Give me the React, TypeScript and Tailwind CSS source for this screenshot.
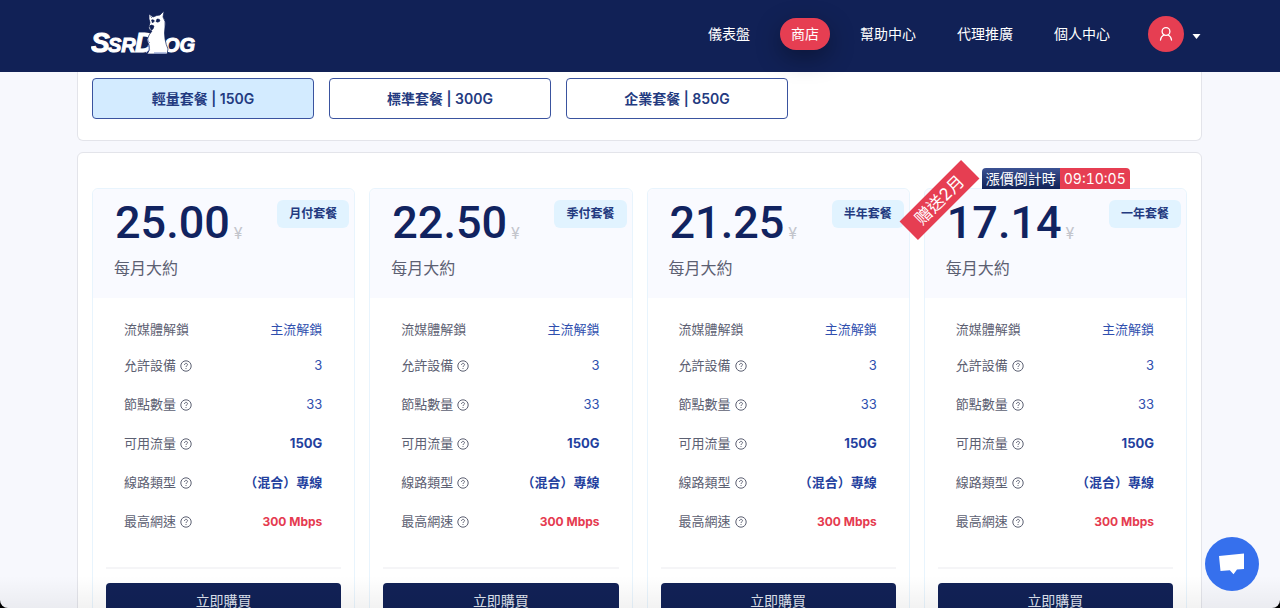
import { useState } from 'react'

const navItems = ['儀表盤', '商店', '幫助中心', '代理推廣', '個人中心']

const tiers = [
  { name: '輕量套餐', traffic: '150G' },
  { name: '標準套餐', traffic: '300G' },
  { name: '企業套餐', traffic: '850G' },
]

const plans = [
  { period: '月付套餐', price: '25.00' },
  { period: '季付套餐', price: '22.50' },
  { period: '半年套餐', price: '21.25' },
  { period: '一年套餐', price: '17.14', gift: '赠送2月', countdown: '09:10:05' },
]

const specs = [
  { label: '允許設備', value: '3', cls: 'text-[#2f4fae]' },
  { label: '節點數量', value: '33', cls: 'text-[#2f4fae]' },
  { label: '可用流量', value: '150G', cls: 'font-bold text-[#233f9e]' },
  { label: '線路類型', value: '（混合）專線', cls: 'font-bold text-[#233f9e]' },
  { label: '最高網速', value: '300 Mbps', cls: 'text-xs font-bold text-[#e53b50]' },
]

function Logo() {
  return (
    <svg width="106" height="48" viewBox="0 0 106 48" role="img" aria-label="SsrDog">
      <g fill="#fff" stroke="#fff" strokeWidth="1" fontFamily="'Liberation Sans', Arial, sans-serif" fontWeight="700" fontStyle="italic">
        <text x="0" y="42" fontSize="28">S</text>
        <text x="17" y="42" fontSize="20">SR</text>
        <text x="44" y="42" fontSize="27">D</text>
        <text x="73" y="42" fontSize="20">OG</text>
      </g>
      <path
        d="M58 4 L62 7 Q66 5 69 5 L73 1 L72 7 Q75 11 74 17 Q73 23 74 29 Q75 35 77 39 L76 44 L56 44 Q60 40 58 35 Q54 29 61 21 Q57 20 58 16 Q60 13 58 9Z"
        fill="#fff"
        stroke="#112156"
        strokeWidth="0.7"
      />
      <path d="M58.500 16q2-2 4.500 0-.5 4-3 4zM60.500 10q2-1 3 1l-2 2zM66 9q3-.5 3 2-2 2-4 .5zM59.500 6.500l1.500 1.500" fill="#112156" stroke="#112156" strokeWidth="0.6" />
      <path d="M56.500 29q0 3 2.500 4M57 35q2 2 1 5l-3 3M63 43h12" fill="none" stroke="#6f85c4" strokeWidth="1" />
    </svg>
  )
}

function HelpIcon() {
  return (
    <svg width="12" height="12" viewBox="0 0 12 12" fill="none" stroke="#5c6072" aria-hidden="true">
      <circle cx="6" cy="6" r="5.200" />
      <path d="M4.500 4.900c0-2 3-2 3-.2 0 1.100-1.500 1.100-1.500 2.300M6 8v.9" />
    </svg>
  )
}

function PlanCard({ plan }: { plan: typeof plans[number] }) {
  return (
    <article className="relative min-w-0 rounded-md border border-[#e8f4fd] bg-white">
      {plan.countdown && (
        <div className="absolute bottom-full left-[57px] flex h-[21px] overflow-hidden rounded-t text-sm leading-[21px] whitespace-nowrap text-white">
          <span className="bg-gradient-to-b from-[#3c5293] to-[#112156] px-1">漲價倒計時</span>
          <span className="bg-[#e63e52] px-1 tabular-nums">{plan.countdown}</span>
        </div>
      )}
      <header className="relative h-[109px] rounded-t-md bg-[#f9faff] px-[21px]">
        <p className="flex h-[67px] items-center pl-px text-[#112360]">
          <span className="pt-px font-[Roboto,sans-serif] text-[45px] font-medium">{plan.price}</span>
          <span className="mt-5 ml-1 text-base text-[#c3c5cc]">¥</span>
        </p>
        <p className="text-base leading-6 text-[#5c6072]">每月大約</p>
        <span className="absolute top-[11px] right-[5px] rounded-md bg-[#e1f3ff] px-3 text-xs leading-7 font-semibold text-[#233a80]">
          {plan.period}
        </span>
      </header>
      {plan.gift && (
        <div className="absolute top-[-2px] left-[-29px] w-[87px] -rotate-45 bg-[#e63e52] text-center text-[17px] leading-[26px] text-white">
          {plan.gift}
        </div>
      )}
      <table className="mt-4 w-full text-[13px]">
        <tbody>
          <tr className="h-8">
            <th scope="row" className="pl-[31px] text-left font-normal text-[#5c6072]">流媒體解鎖</th>
            <td className="pr-8 text-right text-[#2f4fae]">主流解鎖</td>
          </tr>
          {specs.map(s => (
            <tr key={s.label} className="h-[39px]">
              <th scope="row" className="pl-[31px] text-left font-normal text-[#5c6072]">
                <span className="flex items-center gap-1">
                  {s.label}
                  <HelpIcon />
                </span>
              </th>
              <td className={`pr-8 text-right whitespace-nowrap ${s.cls}`}>{s.value}</td>
            </tr>
          ))}
        </tbody>
      </table>
      <footer className="mx-[13px] mt-[26px] border-t-2 border-[#f5f5f7] pt-3.5 pb-4">
        <button type="button" className="h-9 w-full rounded bg-[#112156] text-sm text-[#dfe3ee]">立即購買</button>
      </footer>
    </article>
  )
}

export default function App() {
  const [tier, setTier] = useState(0)

  return (
    <div className="h-screen bg-black">
      <div className="relative h-full overflow-hidden rounded-b-lg bg-[#f7f8fd] font-[Inter,'Noto_Sans_CJK_TC',sans-serif]">
        <header className="relative z-10 h-[72px] bg-[#112156] pr-px pb-1">
          <div className="mx-auto flex h-full max-w-[1125px] items-center justify-between pr-px pl-3.5">
            <a href="#"><Logo /></a>
            <nav className="flex items-center gap-[19px] text-sm text-white">
              {navItems.map(item => (
                <a
                  key={item}
                  href="#"
                  className={item === '商店'
                    ? 'rounded-full bg-[#e63e52] px-[11px] leading-8 shadow-[0_8px_24px_rgba(0,0,0,0.35)]'
                    : 'px-[11px] leading-8'}
                >
                  {item}
                </a>
              ))}
              <button type="button" aria-label="帳戶" className="ml-2 flex items-center gap-2">
                <span className="flex size-9 items-center justify-center rounded-full bg-[#e63e52]">
                  <svg width="14" height="16" viewBox="0 0 14 16" fill="none" stroke="#fff" strokeWidth="1.3" strokeLinecap="round">
                    <circle cx="7" cy="5.500" r="3.900" />
                    <path d="M1.500 14c.2-2.500 1.600-4.200 3.400-5M12.500 14c-.2-2.500-1.600-4.200-3.400-5" />
                  </svg>
                </span>
                <svg width="9" height="5" viewBox="0 0 9 5" className="mt-1"><path d="M.5 0h8L4.500 5z" fill="#fff" /></svg>
              </button>
            </nav>
          </div>
        </header>

        <main className="pr-px">
          <div className="mx-auto max-w-[1125px]">
            <section className="grid grid-cols-[repeat(3,222px)] gap-[15px] rounded-b-md border border-t-0 border-[#e3e4ea] bg-white px-3.5 pt-1.5 pb-[21px]">
              {tiers.map((t, i) => (
                <button
                  key={t.name}
                  type="button"
                  aria-pressed={i === tier}
                  onClick={() => setTier(i)}
                  className={`h-[41px] rounded border border-[#3a539f] text-sm font-semibold text-[#233a80] ${i === tier ? 'bg-[#d3ebff]' : 'bg-white'}`}
                >
                  {t.name} | {t.traffic}
                </button>
              ))}
            </section>

            <section className="mt-[11px] grid grid-cols-4 gap-3.5 rounded-md border border-[#e3e4ea] bg-white px-3.5 pt-[35px] pb-6">
              {plans.map(plan => <PlanCard key={plan.period} plan={plan} />)}
            </section>
          </div>
        </main>

        {/* soft fade along the bottom edge */}
        <div className="pointer-events-none absolute inset-x-0 bottom-0 h-8 bg-gradient-to-t from-black/5 to-transparent" />

        <button type="button" aria-label="線上客服" className="fixed right-[21px] bottom-[17px] flex size-[54px] items-center justify-center rounded-full bg-[#3670ed]">
          <svg width="28" height="24" viewBox="0 0 28 24"><path d="M1 4l25-2.500v15.500l-7 .6-3.500 4.700-3.700-4.100-9.300.8z" fill="#fff" /></svg>
        </button>
      </div>
    </div>
  )
}
